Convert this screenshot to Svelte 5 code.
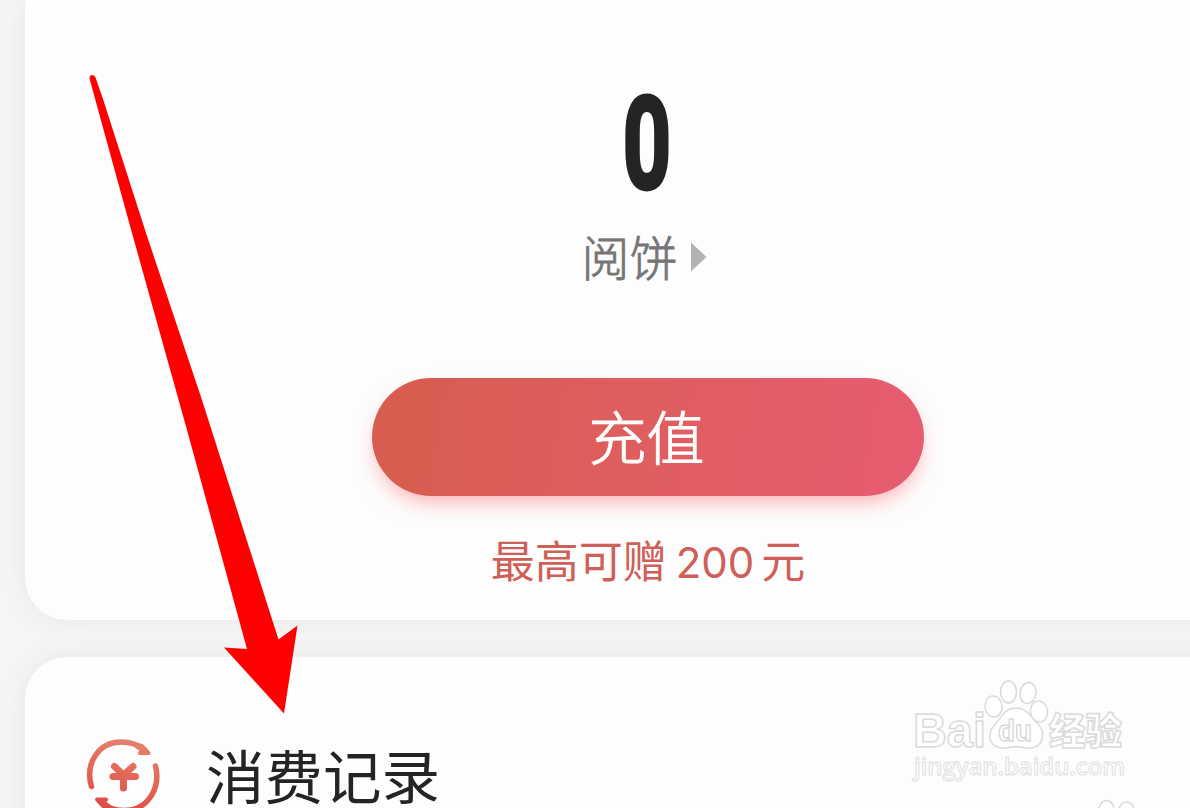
<script>
  let balance = 0;
  let bonus = 200;

  // 百度经验水印里的脚趾
  const toes = [
    { cx: 93.5, cy: 36.5, rx: 8.5, ry: 10.5, angle: -8 },
    { cx: 108.5, cy: 22, rx: 8, ry: 11, angle: 0 },
    { cx: 128, cy: 23, rx: 8, ry: 10.5, angle: 8 },
    { cx: 139, cy: 41.5, rx: 8.5, ry: 10.5, angle: -8 }
  ];
</script>

<div class="page">
  <section class="card balance-card">
    <svg class="amount" viewBox="0 0 100 99" width="100" height="99">
      <text transform="translate(49 94.500) scale(0.66 1)" text-anchor="middle">{balance}</text>
    </svg>
    <div class="unit">
      <span>阅饼</span>
      <svg class="caret" viewBox="0 0 16 30" width="16" height="30">
        <path d="M0 0.500L15.500 15L0 29.500Z" />
      </svg>
    </div>
    <button class="recharge">充值</button>
    <p class="bonus">最高可赠<span class="number">{bonus}</span>元</p>
  </section>

  <section class="card record-card">
    <svg class="record-icon" viewBox="0 0 76 76" width="76" height="76">
      <defs>
        <linearGradient id="coin" gradientUnits="userSpaceOnUse" x1="50" y1="0" x2="30" y2="76">
          <stop offset="0" stop-color="#e6826d" />
          <stop offset="1" stop-color="#df4a42" />
        </linearGradient>
      </defs>
      <g fill="none" stroke="url(#coin)" stroke-width="5.5" stroke-linecap="round" stroke-linejoin="round">
        <path d="M6.500 47.500C-0.500 24 14 3 36 3C46 3 54 6 60 11" />
        <path d="M70.500 27C76 49 63 71.500 39 71.500C29 71.500 21 68 15 62.500" />
        <path d="M29.500 27.500L38.500 36L48 27.500M28 37.500H50.500M38.500 37V49" stroke-width="7" />
      </g>
      <g fill="url(#coin)" stroke="url(#coin)" stroke-width="4" stroke-linejoin="round">
        <path d="M55 14H63.500L57 7L50 6L57 11Z" />
        <path d="M21 60.500H12L18 67L25 68L18.500 63Z" />
      </g>
    </svg>
    <span class="record-title">消费记录</span>
  </section>

  <svg class="watermark" viewBox="0 0 290 138" width="290" height="138">
    <g class="outline">
      <text x="13" y="77" class="latin" font-size="48" textLength="73" lengthAdjust="spacingAndGlyphs">Bai</text>
      {#each toes as toe}
        <ellipse cx={toe.cx} cy={toe.cy} rx={toe.rx} ry={toe.ry} transform="rotate({toe.angle} {toe.cx} {toe.cy})" />
      {/each}
      <path d="M116 38C126 38 130 45 135 51C141 57 144 61 142 69C140 77 132 79 125 78C118 76 114 76 107 78C99 79 91 76 90 68C89 60 94 56 98 51C103 45 106 38 116 38Z" />
      <text x="98" y="71" class="latin" font-size="29" textLength="34" lengthAdjust="spacingAndGlyphs">du</text>
      <text x="149" y="75" class="cjk" font-size="37" textLength="73" lengthAdjust="spacingAndGlyphs">经验</text>
      <text x="14" y="105" class="url" font-size="24" textLength="211" lengthAdjust="spacingAndGlyphs">jingyan.baidu.com</text>
    </g>
    <g class="outline" transform="translate(98 119.500)">
      {#each toes as toe}
        <ellipse cx={toe.cx} cy={toe.cy} rx={toe.rx} ry={toe.ry} transform="rotate({toe.angle} {toe.cx} {toe.cy})" />
      {/each}
    </g>
  </svg>

  <svg class="arrow" viewBox="0 0 1190 808" width="1190" height="808">
    <path d="M89.500 78.500Q89.500 75 92.500 75Q94.500 75 95.500 77.500L103 99L146 233L201 397L278.500 639.500L297.500 625.500L284 713.500L224 647.500L247 649L187 430L132 233L113.500 166Z" />
  </svg>
</div>

<style>
:global(body) {
  margin: 0;
  overflow: hidden;
}

.page {
  position: relative;
  box-sizing: border-box;
  width: 1190px;
  height: 808px;
  overflow: hidden;
  background: #f5f5f5;
  padding-left: 25px;
  font-family: "Inter", "Noto Sans CJK SC", sans-serif;
}

.card {
  box-sizing: border-box;
  width: 1246px;
  background: #fdfdfd;
  box-shadow: 0 0 28px rgba(0, 0, 0, 0.06);
}

.balance-card {
  height: 620px;
  border-radius: 0 0 42px 42px;
  display: flex;
  flex-direction: column;
  align-items: center;
  padding-top: 92px;
}

.amount {
  flex: none;
  overflow: visible;
}

.amount text {
  font-family: Roboto, sans-serif;
  font-size: 125px;
  font-weight: 500;
  fill: #242424;
  stroke: #242424;
  stroke-width: 7px;
  stroke-linejoin: round;
}

.unit {
  display: flex;
  align-items: center;
  gap: 13px;
  height: 60px;
  margin-top: 34px;
  padding-right: 8px;
  font-family: "Noto Sans CJK SC", sans-serif;
  font-size: 48px;
  font-weight: 300;
  line-height: 60px;
  color: #757575;
  -webkit-text-stroke: 0.8px #757575;
}

.caret {
  margin-top: 3px;
  fill: #b3b3b3;
}

.recharge {
  width: 552px;
  height: 118px;
  flex: none;
  margin-top: 93px;
  padding: 0 3px 4px 0;
  border: none;
  border-radius: 59px;
  background: linear-gradient(100deg, #d75d50 8%, #df5e60 50%, #e65c70 98%);
  box-shadow: 0 10px 22px -6px rgba(250, 80, 85, 0.5);
  color: #fff;
  font-family: "Noto Sans CJK SC", sans-serif;
  font-size: 58px;
  font-weight: 300;
  line-height: 114px;
  -webkit-text-stroke: 1px #fff;
}

.bonus {
  margin: 33px 0 0;
  font-family: "Noto Sans CJK SC", sans-serif;
  font-size: 44px;
  line-height: 60px;
  color: #cf6057;
  white-space: nowrap;
}

.number {
  margin: 0 7px 0 9px;
  font-family: Inter, sans-serif;
  font-size: 42px;
}

.record-card {
  height: 240px;
  margin-top: 37px;
  border-radius: 42px 0 0 0;
  display: flex;
  align-items: center;
  gap: 45px;
  padding-left: 60px;
}

.record-icon {
  flex: none;
}

.record-title {
  padding-bottom: 7px;
  font-family: "Noto Sans CJK SC", sans-serif;
  font-size: 58.5px;
  line-height: 80px;
  color: #242424;
}

.watermark {
  position: absolute;
  left: 900px;
  top: 670px;
}

.outline {
  fill: #fff;
  stroke: #dadada;
  stroke-width: 1.5;
}

.latin {
  font-family: "Liberation Sans", Arial, sans-serif;
  font-weight: 700;
}

.cjk {
  font-family: "Noto Sans CJK SC", sans-serif;
  font-weight: 900;
}

.url {
  font-family: "Open Sans", sans-serif;
  font-weight: 600;
  stroke: #e0e0e0;
  stroke-width: 1;
}

.arrow {
  position: absolute;
  left: 0;
  top: 0;
  fill: #fe0000;
  pointer-events: none;
}
</style>
